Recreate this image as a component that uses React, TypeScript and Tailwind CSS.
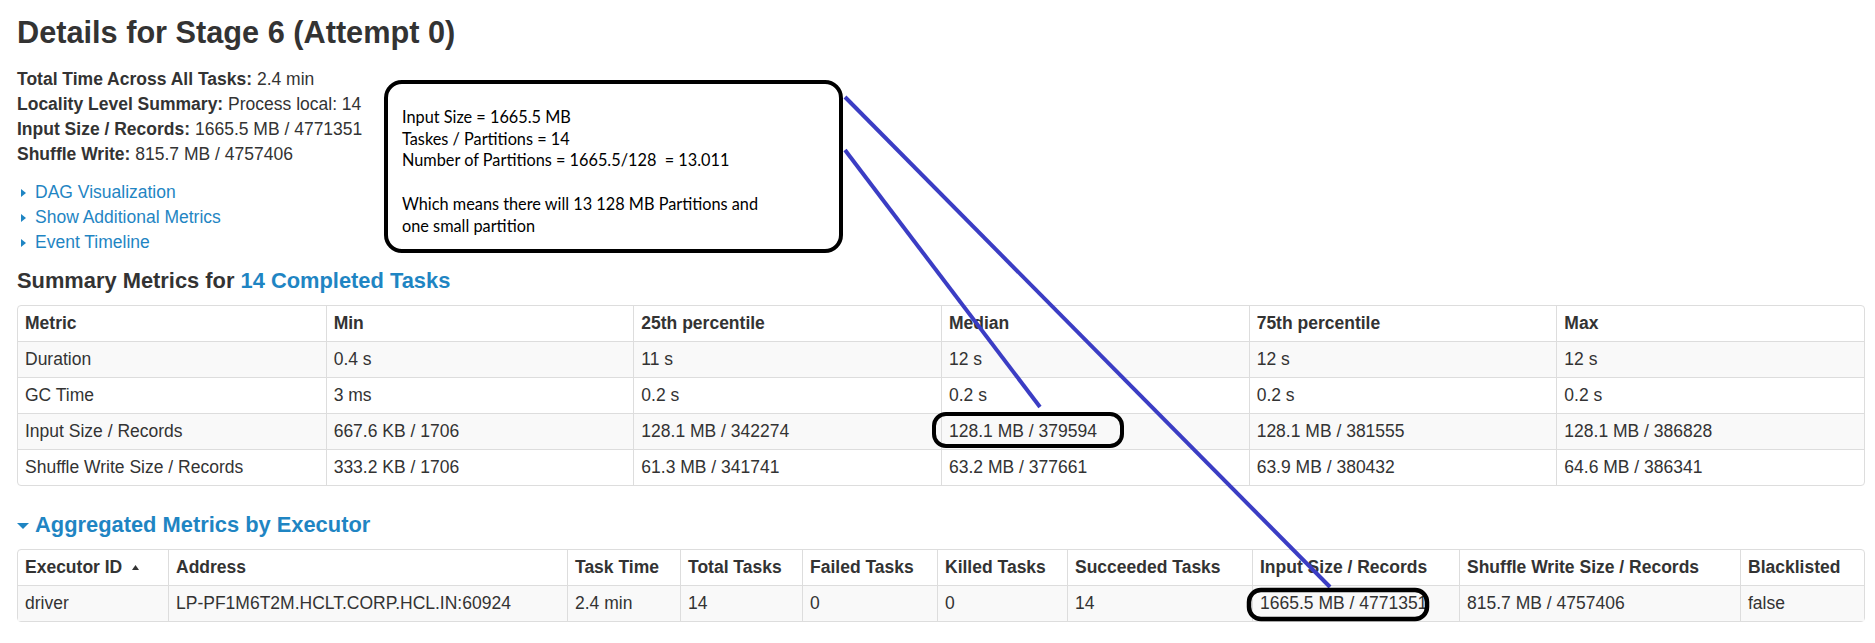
const summaryHead = ["Metric", "Min", "25th percentile", "Median", "75th percentile", "Max"];

const summaryRows = [
  ["Duration", "0.4 s", "11 s", "12 s", "12 s", "12 s"],
  ["GC Time", "3 ms", "0.2 s", "0.2 s", "0.2 s", "0.2 s"],
  ["Input Size / Records", "667.6 KB / 1706", "128.1 MB / 342274", "128.1 MB / 379594", "128.1 MB / 381555", "128.1 MB / 386828"],
  ["Shuffle Write Size / Records", "333.2 KB / 1706", "61.3 MB / 341741", "63.2 MB / 377661", "63.9 MB / 380432", "64.6 MB / 386341"],
];

const executorHead = [
  "Executor ID",
  "Address",
  "Task Time",
  "Total Tasks",
  "Failed Tasks",
  "Killed Tasks",
  "Succeeded Tasks",
  "Input Size / Records",
  "Shuffle Write Size / Records",
  "Blacklisted",
];

const executorRow = [
  "driver",
  "LP-PF1M6T2M.HCLT.CORP.HCL.IN:60924",
  "2.4 min",
  "14",
  "0",
  "0",
  "14",
  "1665.5 MB / 4771351",
  "815.7 MB / 4757406",
  "false",
];

const ArrowRight = () => (
  <svg width="5" height="8" viewBox="0 0 5 8" className="ml-[4px] mr-[9px]">
    <polygon points="0,0 5,4 0,8" fill="#1f85c3" />
  </svg>
);

const Info = ({ label, value }: { label: string; value: string }) => (
  <div>
    <span className="font-bold">{label}</span> {value}
  </div>
);

// striped rows like the bootstrap table
const Cell = ({ text, first, head }: { text: string; first: boolean; head?: boolean }) => (
  <div
    className={`flex items-center pl-[7px] h-[35px] leading-[35px] whitespace-nowrap ${
      first ? "" : "border-l border-[#ddd]"
    } ${head ? "font-bold" : ""}`}
  >
    {text}
  </div>
);

export default function App() {
  return (
    <div className="relative w-[1875px] h-[643px] bg-white text-[#333] font-['Liberation_Sans',Arial,sans-serif] overflow-hidden">
      <div className="pl-[17px]">
        <h3 className="pt-[15px] text-[30.7px] leading-[36px] font-bold">Details for Stage 6 (Attempt 0)</h3>

        <div className="mt-[16px] text-[17.5px] leading-[25px]">
          <Info label="Total Time Across All Tasks:" value="2.4 min" />
          <Info label="Locality Level Summary:" value="Process local: 14" />
          <Info label="Input Size / Records:" value="1665.5 MB / 4771351" />
          <Info label="Shuffle Write:" value="815.7 MB / 4757406" />
        </div>

        <div className="mt-[13px] text-[17.5px] leading-[25px] text-[#1f85c3]">
          {["DAG Visualization", "Show Additional Metrics", "Event Timeline"].map((l) => (
            <div key={l} className="flex items-center">
              <ArrowRight />
              <span>{l}</span>
            </div>
          ))}
        </div>

        <h4 className="mt-[12px] text-[21.875px] leading-[28px] font-bold">
          Summary Metrics for <span className="text-[#1f85c3]">14 Completed Tasks</span>
        </h4>

        <div className="mt-[10px] w-[1848px] border border-[#ddd] rounded-[4px] text-[17.5px]">
          <div className="grid grid-cols-6">
            {summaryHead.map((h, i) => (
              <Cell key={h} text={h} first={i === 0} head />
            ))}
          </div>
          {summaryRows.map((row, r) => (
            <div key={r} className={`grid grid-cols-6 border-t border-[#ddd] ${r % 2 === 0 ? "bg-[#f9f9f9]" : ""}`}>
              {row.map((c, i) => (
                <Cell key={i} text={c} first={i === 0} />
              ))}
            </div>
          ))}
        </div>

        <h4 className="mt-[25px] flex items-center text-[21.875px] leading-[28px] font-bold text-[#1f85c3]">
          <svg width="12" height="6" viewBox="0 0 12 6" className="mr-[6px] mt-[1px]">
            <polygon points="0,0 12,0 6,6" fill="#1f85c3" />
          </svg>
          Aggregated Metrics by Executor
        </h4>

        <div className="mt-[10px] w-[1848px] border border-[#ddd] rounded-[4px] text-[17.5px]">
          <div className="grid grid-cols-[150px_399px_113px_122px_135px_130px_185px_207px_281px_1fr]">
            {executorHead.map((h, i) => (
              <div
                key={h}
                className={`flex items-center pl-[7px] h-[35px] font-bold whitespace-nowrap ${
                  i === 0 ? "" : "border-l border-[#ddd]"
                }`}
              >
                {h}
                {i === 0 && (
                  <svg width="7" height="5" viewBox="0 0 7 5" className="ml-[10px]">
                    <polygon points="0,5 7,5 3.5,0" fill="#333" />
                  </svg>
                )}
              </div>
            ))}
          </div>
          <div className="grid grid-cols-[150px_399px_113px_122px_135px_130px_185px_207px_281px_1fr] border-t border-[#ddd] bg-[#f9f9f9]">
            {executorRow.map((c, i) => (
              <Cell key={i} text={c} first={i === 0} />
            ))}
          </div>
        </div>
      </div>

      {/* hand-drawn annotation on top of the screenshot */}
      <div className="absolute left-[384px] top-[80px] w-[459px] h-[173px] border-4 border-black rounded-[18px] bg-white pl-[14px] pt-[22px] font-['Lato',sans-serif] text-[16.3px] leading-[21.7px] text-black whitespace-pre">
        <div>Input Size = 1665.5 MB</div>
        <div>Taskes / Partitions = 14</div>
        <div>Number of Partitions = 1665.5/128  = 13.011</div>
        <div>&nbsp;</div>
        <div>Which means there will 13 128 MB Partitions and</div>
        <div>one small partition</div>
      </div>

      <svg className="absolute left-0 top-0 pointer-events-none" width="1875" height="643">
        <line x1="845" y1="97" x2="1330" y2="587" stroke="#3b3dc4" strokeWidth="4" />
        <line x1="845" y1="150" x2="1040" y2="407" stroke="#3b3dc4" strokeWidth="4" />
        <rect x="934" y="414" width="188" height="32" rx="12" fill="none" stroke="#000" strokeWidth="4" />
        <rect x="1249" y="590" width="178" height="29" rx="12" fill="none" stroke="#000" strokeWidth="4.5" />
      </svg>
    </div>
  );
}
